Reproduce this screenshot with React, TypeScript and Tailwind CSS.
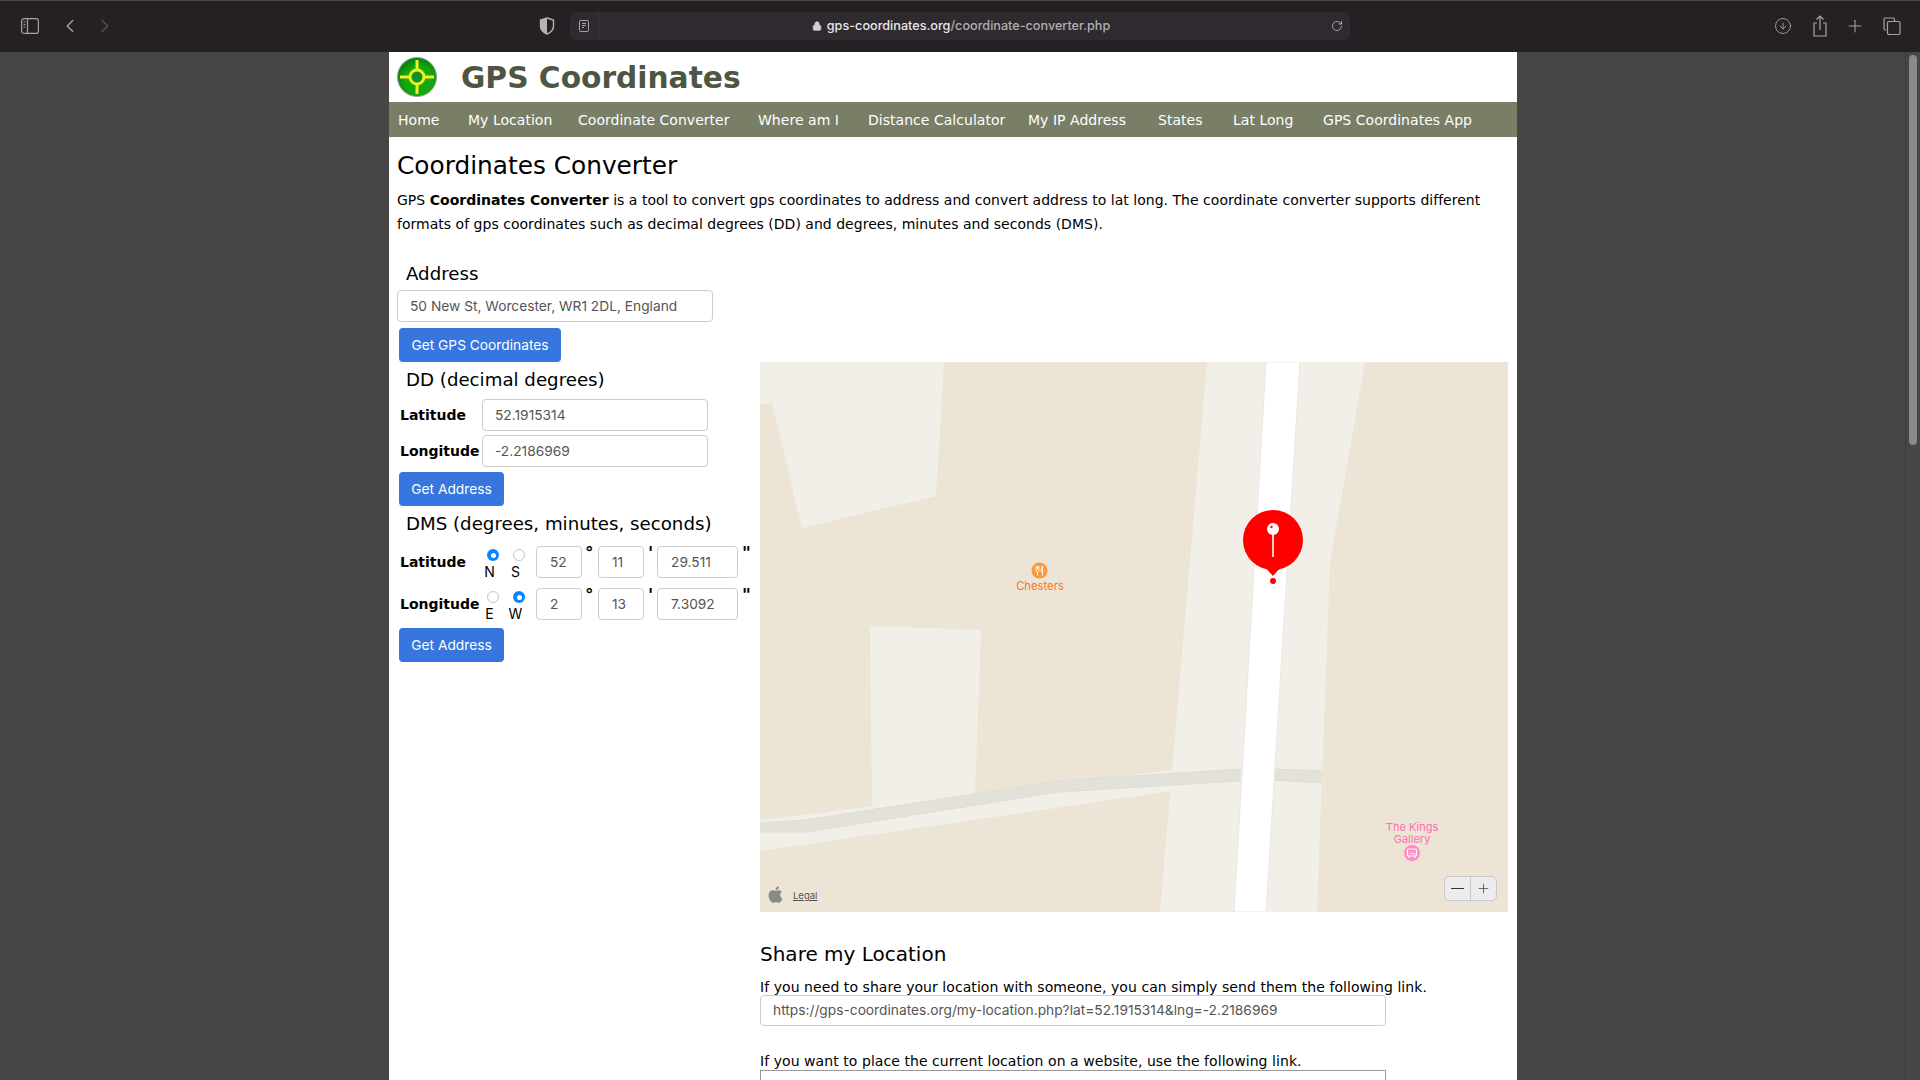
import { ChevronLeft, ChevronRight, CircleArrowDown, Lock, Plus, RotateCw } from 'lucide-react'
import { FaApple } from 'react-icons/fa'

const navItems = [
  { label: 'Home', cls: 'w-[70px]' },
  { label: 'My Location', cls: 'w-[110px]' },
  { label: 'Coordinate Converter', cls: 'w-[180px]' },
  { label: 'Where am I', cls: 'w-[110px]' },
  { label: 'Distance Calculator', cls: 'w-[160px]' },
  { label: 'My IP Address', cls: 'w-[130px]' },
  { label: 'States', cls: 'w-[75px]' },
  { label: 'Lat Long', cls: 'w-[90px]' },
  { label: 'GPS Coordinates App', cls: 'w-[180px]' },
]

const verdana = 'font-["DejaVu_Sans",sans-serif]'
const inputCls =
  'flex h-8 shrink-0 items-center rounded-[4px] border border-[#ccc] bg-white font-["Inter",sans-serif] text-[13.75px] text-[#555]'

function Toolbar() {
  return (
    <header className="relative flex h-[52px] shrink-0 items-center border-t border-[#4a4a4b] bg-[#242024] pb-px text-[#a5a3a5]">
      <div className="flex w-[570px] items-center">
        {/* sidebar toggle */}
        <svg className="ml-[21px]" width="18" height="16" viewBox="0 0 18 16" fill="none" stroke="currentColor" strokeWidth="1.2">
          <rect x="0.6" y="0.6" width="16.8" height="14.8" rx="2.5" />
          <path d="M6.5 0.6V15.4" />
          <path d="M2.5 4H4.5M2.5 6.5H4.5M2.5 9H4.5" />
        </svg>
        <ChevronLeft className="ml-[20px]" size={22} strokeWidth={1.5} />
        <ChevronRight className="ml-[13px] text-[#565356]" size={22} strokeWidth={1.5} />
        {/* privacy shield */}
        <svg className="ml-[423px]" width="16" height="18" viewBox="0 0 16 18">
          <path d="M8 1 L14.5 3 V9 C14.5 13 11.5 15.5 8 17 C4.5 15.5 1.5 13 1.5 9 V3 Z" fill="none" stroke="#b5b3b5" strokeWidth="1.4" />
          <path d="M8 1 L1.5 3 V9 C1.5 13 4.5 15.5 8 17 Z" fill="#b5b3b5" />
        </svg>
      </div>
      <div className="flex h-[28px] w-[780px] items-center rounded-[6px] bg-[#2f2a2f]">
        {/* reader icon */}
        <svg className="ml-[9px]" width="10" height="12" viewBox="0 0 10 12" fill="none" stroke="currentColor">
          <rect x="0.5" y="0.5" width="9" height="11" rx="1" />
          <path d="M3 3.5H7M3 5.5H7M3 7.5H5" />
        </svg>
        <span className="ml-[9px] h-[28px] w-px bg-[#3a353a]" />
        <div className='flex flex-1 items-center justify-center pr-[8px] font-["Inter",sans-serif] text-[12.65px] font-medium'>
          <Lock className="mr-[5px] text-[#d0d0d0]" size={10} fill="currentColor" />
          <span className="text-[#e8e8e8]">gps-coordinates.org</span>
          <span className="text-[#b0aeb0]">/coordinate-converter.php</span>
        </div>
        <RotateCw className="mr-[7px] text-[#c0bec0]" size={12} strokeWidth={1.6} />
      </div>
      <div className="ml-auto flex items-center pr-[19px]">
        <CircleArrowDown size={18} strokeWidth={1.2} />
        <svg className="ml-[20px]" width="16" height="24" viewBox="0 0 16 24" fill="none" stroke="currentColor" strokeWidth="1.2">
          <path d="M8 16V2M4.5 5.5L8 2L11.5 5.5" />
          <path d="M5 9H2V22H14V9H11" />
        </svg>
        <Plus className="ml-[17px]" size={20} strokeWidth={1.3} />
        <svg className="ml-[18px]" width="18" height="18" viewBox="0 0 18 18" fill="none" stroke="currentColor" strokeWidth="1.2">
          <path d="M3 13H2.5A1.5 1.5 0 0 1 1 11.5V2.5A1.5 1.5 0 0 1 2.5 1H10A1.5 1.5 0 0 1 11.5 2.5V4" />
          <rect x="4.5" y="4.5" width="12.5" height="13" rx="1.5" />
        </svg>
      </div>
    </header>
  )
}

function Logo() {
  return (
    <svg className="-mt-px" width="40" height="40" viewBox="0 0 40 40">
      <defs>
        <radialGradient id="logoGreen" cx="0.55" cy="0.6" r="0.6">
          <stop offset="0.6" stopColor="#14a80e" />
          <stop offset="1" stopColor="#0a7a10" />
        </radialGradient>
      </defs>
      <circle cx="20" cy="20" r="19.5" fill="url(#logoGreen)" stroke="#8fa88f" strokeWidth="1" />
      <circle cx="20" cy="20" r="7" fill="#0c9230" stroke="#f2f01a" strokeWidth="3" />
      <path d="M20 3V12M20 28V37M3 20H12M28 20H37" stroke="#f2f01a" strokeWidth="3" />
    </svg>
  )
}

function MapPanel() {
  return (
    <div className="relative h-[550px] w-[748px] overflow-hidden bg-[#ece5d6]">
      <svg className="absolute inset-0" width="748" height="550" viewBox="0 0 748 550">
        <g fill="#f2efe8">
          <path d="M0 0H184L176 134L42 166L12 41L0 43Z" />
          <path d="M447 0H605L570 200L557 550H400Z" />
          <path d="M110 264L221 268L215 434L112 448Z" />
          <path d="M0 458L413 408L520 404V430L413 429L0 489Z" />
        </g>
        <g fill="#e3e2da" stroke="#dfded5" strokeWidth="1">
          <path d="M0 461L45 458L298 419L480 407V419L298 430L47 470L0 470Z" />
          <path d="M510 407L561 408.5V421L510 418Z" />
        </g>
        <path d="M506 0H540L506 550H474Z" fill="#ffffff" stroke="#e9e8e2" strokeWidth="1" />
        {/* pin */}
        <circle cx="513" cy="178" r="30" fill="#ff0000" />
        <path d="M505 205L513 214L521 205Z" fill="#ff0000" />
        <circle cx="513" cy="219" r="3" fill="#ff0000" />
        <circle cx="513" cy="167" r="6" fill="#ffffff" />
        <circle cx="511.5" cy="165" r="1.2" fill="#ff0000" />
        <path d="M513 172V195" stroke="#ffffff" strokeWidth="1.6" />
        {/* restaurant marker */}
        <circle cx="279.5" cy="208.5" r="8" fill="#fb9a3c" />
        <path d="M276 204V208Q276 209.5 277.5 210V213.5M277.5 204V207.5M279 204V208Q279 209.5 277.5 210M282.5 204V213.5M282.5 204Q281 205.5 281 209.5H282.5" stroke="#fff" strokeWidth="0.9" fill="none" />
        {/* gallery marker */}
        <circle cx="652" cy="491" r="8" fill="#ff8cc2" />
        <rect x="647.5" y="487" width="9" height="7" rx="1" fill="none" stroke="#fff" strokeWidth="1.1" />
        <path d="M649 496V494M655 496V494" stroke="#fff" strokeWidth="1.1" />
        <path d="M649 492.5L651 490.5L653 492.5L654.5 491L655.5 492.5" stroke="#fff" strokeWidth="0.8" fill="none" />
      </svg>
      <span className='absolute left-[240px] top-[217px] w-[80px] text-center font-["Inter",sans-serif] text-[11.25px] leading-[14px] text-[#ee7a1e]'>
        Chesters
      </span>
      <span className='absolute left-[612px] top-[459px] w-[80px] text-center font-["Inter",sans-serif] text-[11px] leading-[12px] text-[#ff6db0]'>
        The Kings
        <br />
        Gallery
      </span>
      <FaApple className="absolute left-[6px] top-[523px] text-[#8a8a85]" size={19} />
      <span className='absolute left-[33px] top-[528px] font-["Inter",sans-serif] text-[9.5px] leading-[12px] text-[#55534e] underline'>
        Legal
      </span>
      <div className="absolute left-[684px] top-[514px] flex h-[25px] w-[53px] items-center rounded-[5px] border border-[#c8c8c8] bg-[#ececec] text-[#333]">
        <span className="flex h-full w-[26px] items-center justify-center border-r border-[#c8c8c8]">
          <span className="h-px w-[13px] bg-[#333]" />
        </span>
        <span className="flex flex-1 items-center justify-center">
          <Plus size={15} strokeWidth={1.1} />
        </span>
      </div>
    </div>
  )
}

function Radio({ on, letter }: { on?: boolean; letter: string }) {
  return (
    <div className="flex h-8 w-[26px] flex-col items-center pt-[3px]">
      {on ? (
        <span className="flex h-3 w-3 shrink-0 items-center justify-center rounded-full bg-[#0a84ff]">
          <span className="h-[5px] w-[5px] rounded-full bg-white" />
        </span>
      ) : (
        <span className="h-3 w-3 shrink-0 rounded-full border border-[#c4c4c4] bg-white" />
      )}
      <span className='mt-[3px] -ml-[7px] shrink-0 font-["Inter",sans-serif] text-[14px] leading-4 text-black'>{letter}</span>
    </div>
  )
}

function BlueButton({ children, cls }: { children: string; cls: string }) {
  return (
    <button
      type="button"
      className={`ml-[3px] h-[34px] rounded-[4px] bg-[#3676de] font-["Inter",sans-serif] text-[13.75px] text-white ${cls}`}
    >
      {children}
    </button>
  )
}

function Mark({ children, cls }: { children: string; cls: string }) {
  return <span className={`-mt-[1px] self-start text-[17px] font-bold leading-4 text-black ${cls}`}>{children}</span>
}

function DmsRow({
  label,
  first,
  second,
  deg,
  min,
  sec,
}: {
  label: string
  first: { letter: string; on?: boolean }
  second: { letter: string; on?: boolean }
  deg: string
  min: string
  sec: string
}) {
  return (
    <div className="flex h-8 items-center">
      <b className="ml-[4px] w-[80px] text-[14px]">{label}</b>
      <Radio {...first} />
      <Radio {...second} />
      <div className={`${inputCls} ml-[4px] w-[46px] pl-[13px]`}>{deg}</div>
      <Mark cls="w-[16px] pl-[3px]">°</Mark>
      <div className={`${inputCls} w-[46px] pl-[13px]`}>{min}</div>
      <Mark cls="w-[13px] pl-[4px]">'</Mark>
      <div className={`${inputCls} w-[81px] pl-[13px]`}>{sec}</div>
      <Mark cls="pl-[4px]">"</Mark>
    </div>
  )
}

function Sidebar() {
  return (
    <div className="-ml-px w-[364px] shrink-0">
      <h2 className="ml-[10px] mt-[24px] text-[18.2px] leading-7">Address</h2>
      <div className={`${inputCls} ml-px mt-[2px] w-[316px] pl-3`}>50 New St, Worcester, WR1 2DL, England</div>
      <BlueButton cls="mt-[6px] block w-[162px]">Get GPS Coordinates</BlueButton>
      <h2 className="ml-[10px] mt-[4px] text-[18.2px] leading-7">DD (decimal degrees)</h2>

      <div className="mt-[5px] flex h-8 items-center">
        <b className="ml-[4px] w-[82px] text-[14px]">Latitude</b>
        <div className={`${inputCls} w-[226px] pl-3`}>52.1915314</div>
      </div>
      <div className="mt-[4px] flex h-8 items-center">
        <b className="ml-[4px] w-[82px] text-[14px]">Longitude</b>
        <div className={`${inputCls} w-[226px] pl-3`}>-2.2186969</div>
      </div>
      <BlueButton cls="mt-[5px] block w-[105px]">Get Address</BlueButton>

      <h2 className="ml-[10px] mt-[4px] text-[18.2px] leading-7">DMS (degrees, minutes, seconds)</h2>
      <div className="mt-[8px]">
        <DmsRow label="Latitude" first={{ letter: 'N', on: true }} second={{ letter: 'S' }} deg="52" min="11" sec="29.511" />
      </div>
      <div className="mt-[10px]">
        <DmsRow label="Longitude" first={{ letter: 'E' }} second={{ letter: 'W', on: true }} deg="2" min="13" sec="7.3092" />
      </div>
      <BlueButton cls="mt-[8px] block w-[105px]">Get Address</BlueButton>
    </div>
  )
}

export default function App() {
  return (
    <div className={`flex h-screen w-full flex-col overflow-hidden bg-[#474647] text-black ${verdana}`}>
      <Toolbar />
      <div className="flex min-h-0 flex-1">
        <div className="w-[389px] shrink-0" />
        <main className="w-[1128px] shrink-0 overflow-hidden bg-white">
          <div className="flex h-[50px] items-center pl-[8px]">
            <Logo />
            <h1 className="ml-[24px] mt-[2px] text-[29.7px] font-bold text-[#4f5543]">GPS Coordinates</h1>
          </div>
          <nav className="flex h-[35px] items-center bg-[#797e67] pl-[9px] pt-[2px] text-[14px] tracking-[0.03px] text-white">
            {navItems.map((item) => (
              <a key={item.label} className={`shrink-0 whitespace-nowrap ${item.cls}`}>
                {item.label}
              </a>
            ))}
          </nav>
          <div className="pl-[8px]">
            <h2 className="mt-[14px] text-[24.8px] leading-[30px]">Coordinates Converter</h2>
            <p className="mt-[7px] w-[1110px] text-[14px] leading-6 tracking-[0.02px]">
              GPS <b>Coordinates Converter</b> is a tool to convert gps coordinates to address and convert address to lat
              long. The coordinate converter supports different formats of gps coordinates such as decimal degrees (DD) and
              degrees, minutes and seconds (DMS).
            </p>
            <div className="flex">
              <Sidebar />
              <div className="pt-[126px]">
                <MapPanel />
                <h3 className="mt-[28px] text-[20px] leading-7">Share my Location</h3>
                <p className="mt-[11px] text-[14px] leading-4 tracking-[0.06px]">
                  If you need to share your location with someone, you can simply send them the following link.
                </p>
                <div className={`${inputCls} !h-[31px] w-[626px] pl-3`}>https://gps-coordinates.org/my-location.php?lat=52.1915314&amp;lng=-2.2186969</div>
                <p className="mt-[27px] text-[14px] leading-4 tracking-[0.06px]">
                  If you want to place the current location on a website, use the following link.
                </p>
                <div className="mt-px h-8 w-[626px] border border-[#999]" />
              </div>
            </div>
          </div>
        </main>
        <div className="flex flex-1 justify-end">
          <div className="flex w-[15px] justify-center border-l border-[#3c3b3c] bg-[#474647] pt-[3px]">
            <div className="h-[390px] w-2 rounded-full bg-[#8b8a8b]" />
          </div>
        </div>
      </div>
    </div>
  )
}
